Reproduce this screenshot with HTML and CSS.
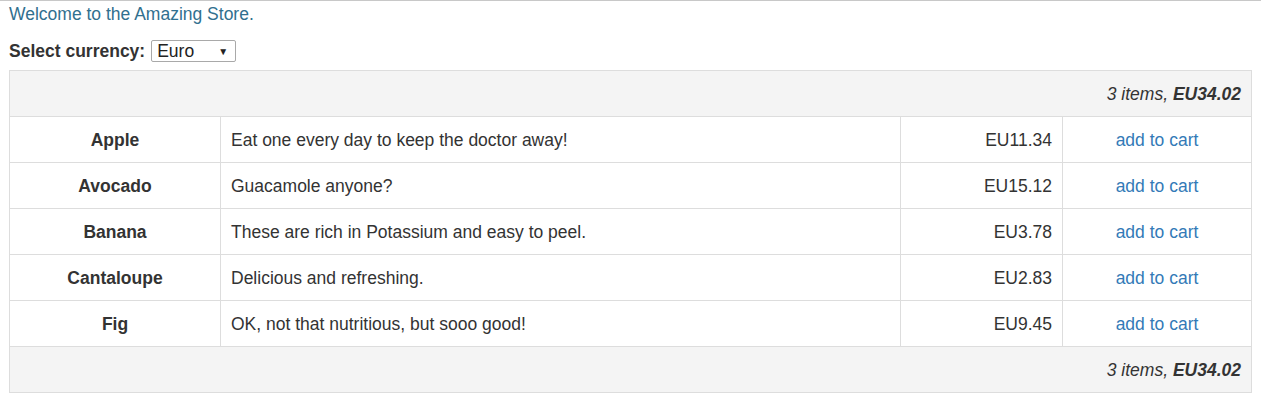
FILE: index.html
```html
<!DOCTYPE html>
<html>
<head>
<meta charset="utf-8">
<link rel="stylesheet" href="styles.css">
</head>
<body>
<div class="page">
  <div class="welcome">Welcome to the Amazing Store.</div>
  <div class="currency">
    <label class="currency-label">Select currency:</label>
    <span class="select"><span class="select-value">Euro</span><span class="select-arrow">▼</span></span>
  </div>
  <table class="store">
    <colgroup>
      <col class="c-name"><col class="c-desc"><col class="c-price"><col class="c-action">
    </colgroup>
    <tr class="summary"><td colspan="4"><em>3 items, <strong>EU34.02</strong></em></td></tr>
    <tr><th>Apple</th><td>Eat one every day to keep the doctor away!</td><td class="price">EU11.34</td><td class="action"><a>add to cart</a></td></tr>
    <tr><th>Avocado</th><td>Guacamole anyone?</td><td class="price">EU15.12</td><td class="action"><a>add to cart</a></td></tr>
    <tr><th>Banana</th><td>These are rich in Potassium and easy to peel.</td><td class="price">EU3.78</td><td class="action"><a>add to cart</a></td></tr>
    <tr><th>Cantaloupe</th><td>Delicious and refreshing.</td><td class="price">EU2.83</td><td class="action"><a>add to cart</a></td></tr>
    <tr><th>Fig</th><td>OK, not that nutritious, but sooo good!</td><td class="price">EU9.45</td><td class="action"><a>add to cart</a></td></tr>
    <tr class="summary"><td colspan="4"><em>3 items, <strong>EU34.02</strong></em></td></tr>
  </table>
</div>
</body>
</html>
```
FILE: styles.css
```css
html, body { margin: 0; padding: 0; background: #fff; }
body {
  font-family: "Liberation Sans", Arial, sans-serif;
  font-size: 17.5px;
  color: #333;
  border-top: 1px solid #c8c8c8;
}
.page { padding: 0 9px; }
.welcome { color: #31708f; line-height: 20px; padding-top: 3px; height: 21px; }
.currency { display: flex; align-items: center; margin-top: 15px; gap: 6px; height: 22px; }
.currency-label { font-weight: bold; }
.select {
  display: flex; align-items: center; justify-content: space-between;
  width: 85px; height: 22px; box-sizing: border-box;
  border: 1px solid #a9a9a9; border-radius: 2px; padding: 0 7px 0 5px;
  color: #222;
}
.select-arrow { font-size: 10px; }
.store {
  margin-top: 8px;
  width: 1243px;
  border-collapse: collapse;
  border: 1px solid #ddd;
}
.c-name { width: 211px; }
.c-desc { width: 680px; }
.c-price { width: 162px; }
.store td, .store th { border: 1px solid #ddd; height: 46px; box-sizing: border-box; padding: 0 10px; line-height: 20px; }
.store th { font-weight: bold; text-align: center; }
.summary td { background: #f4f4f4; text-align: right; }
.price { text-align: right; }
.action { text-align: center; }
.action a { color: #337ab7; }
```
